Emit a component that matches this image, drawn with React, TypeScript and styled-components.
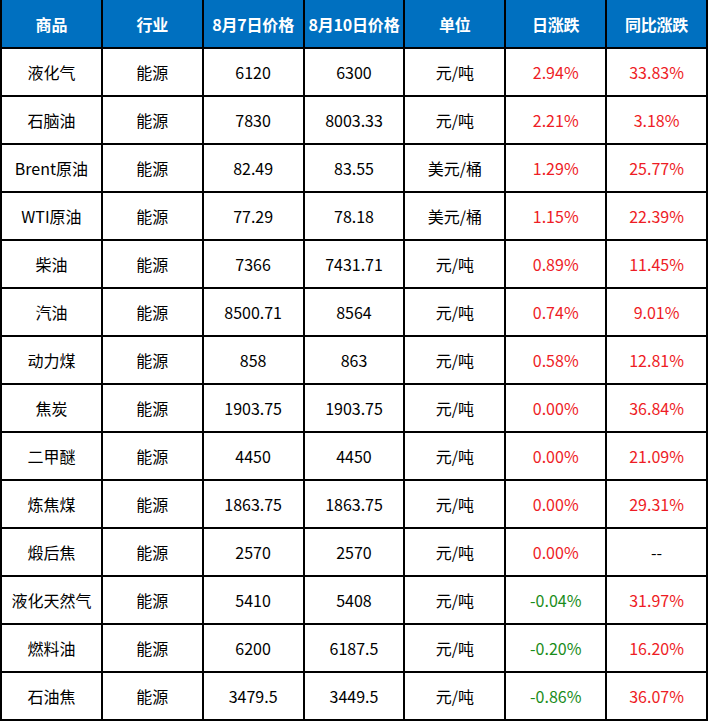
import React from "react";
import styled, { createGlobalStyle } from "styled-components";

const Global = createGlobalStyle`
  html, body { margin: 0; padding: 0; background: #fff; }
  body { font-family: "Noto Sans CJK SC", "Noto Sans", sans-serif; }
`;

const Table = styled.div`
  width: 708px;
  box-sizing: border-box;
  display: grid;
  grid-template-columns: repeat(7, 1fr);
  grid-template-rows: 47px repeat(14, 46px);
  column-gap: 2px;
  row-gap: 2px;
  padding: 0 2px 2px 2px;
  background: #000;
`;

const HeadCell = styled.div`
  background: #0070c0;
  color: #fff;
  font-weight: 700;
  font-size: 16px;
  display: flex;
  align-items: center;
  justify-content: center;
  white-space: nowrap;
  letter-spacing: -0.2px;
`;

type Tone = "up" | "down" | "flat";

const Cell = styled.div<{ $tone?: Tone }>`
  background: #fff;
  color: ${(p) => (p.$tone === "up" ? "#ee1c25" : p.$tone === "down" ? "#1a8c1a" : "#000")};
  font-size: 16px;
  display: flex;
  align-items: center;
  justify-content: center;
  white-space: nowrap;
`;

const headers = ["商品", "行业", "8月7日价格", "8月10日价格", "单位", "日涨跌", "同比涨跌"];

const rows: string[][] = [
  ["液化气", "能源", "6120", "6300", "元/吨", "2.94%", "33.83%"],
  ["石脑油", "能源", "7830", "8003.33", "元/吨", "2.21%", "3.18%"],
  ["Brent原油", "能源", "82.49", "83.55", "美元/桶", "1.29%", "25.77%"],
  ["WTI原油", "能源", "77.29", "78.18", "美元/桶", "1.15%", "22.39%"],
  ["柴油", "能源", "7366", "7431.71", "元/吨", "0.89%", "11.45%"],
  ["汽油", "能源", "8500.71", "8564", "元/吨", "0.74%", "9.01%"],
  ["动力煤", "能源", "858", "863", "元/吨", "0.58%", "12.81%"],
  ["焦炭", "能源", "1903.75", "1903.75", "元/吨", "0.00%", "36.84%"],
  ["二甲醚", "能源", "4450", "4450", "元/吨", "0.00%", "21.09%"],
  ["炼焦煤", "能源", "1863.75", "1863.75", "元/吨", "0.00%", "29.31%"],
  ["煅后焦", "能源", "2570", "2570", "元/吨", "0.00%", "--"],
  ["液化天然气", "能源", "5410", "5408", "元/吨", "-0.04%", "31.97%"],
  ["燃料油", "能源", "6200", "6187.5", "元/吨", "-0.20%", "16.20%"],
  ["石油焦", "能源", "3479.5", "3449.5", "元/吨", "-0.86%", "36.07%"],
];

function toneOf(v: string): Tone {
  if (v === "--") return "flat";
  if (v.startsWith("-")) return "down";
  return "up";
}

export default function App() {
  return (
    <>
      <Global />
      <Table>
        {headers.map((h) => (
          <HeadCell key={h}>{h}</HeadCell>
        ))}
        {rows.map((r, i) =>
          r.map((v, j) => (
            <Cell key={`${i}-${j}`} $tone={j >= 5 ? toneOf(v) : undefined}>
              {v}
            </Cell>
          ))
        )}
      </Table>
    </>
  );
}
